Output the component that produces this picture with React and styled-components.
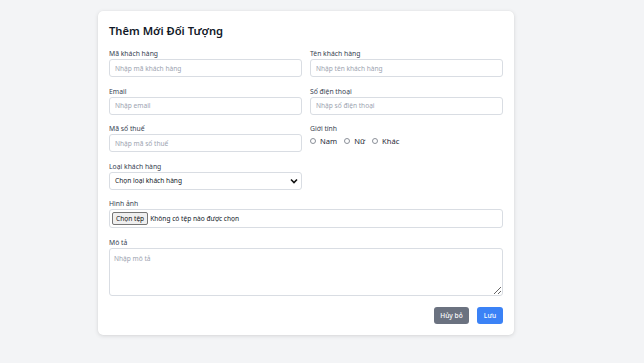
import React from "react";
import styled, { createGlobalStyle } from "styled-components";

const Global = createGlobalStyle`
  html, body { margin: 0; padding: 0; background: #f3f4f6; }
  body { font-family: "Noto Sans", "Open Sans", Arial, sans-serif; color: #1f2937; }
  * { box-sizing: border-box; }
`;

const Page = styled.div`
  min-height: 363px;
  display: flex;
  align-items: flex-start;
  justify-content: center;
  padding: 11px 32px 0 0;
`;

const Card = styled.form`
  width: 416px;
  background: #fff;
  border-radius: 5px;
  box-shadow: 0 1px 4px rgba(0, 0, 0, 0.12), 0 0 1px rgba(0, 0, 0, 0.08);
  padding: 11px 11px 11px 11px;
`;

const Title = styled.h2`
  margin: 0 0 9px 0;
  font-size: 11.2px;
  font-weight: 600;
  line-height: 18px;
  color: #111827;
`;

const Grid = styled.div`
  display: grid;
  grid-template-columns: 1fr 1fr;
  column-gap: 8px;
  row-gap: 9.6px;
`;

const Field = styled.div`
  display: flex;
  flex-direction: column;
  grid-column: ${(p) => (p.$full ? "1 / -1" : "auto")};
`;

const Label = styled.label`
  font-size: 6.8px;
  line-height: 10px;
  color: #374151;
  margin-bottom: 0;
`;

const Input = styled.input`
  height: 18px;
  border: 1px solid #d9dde3;
  border-radius: 3px;
  padding: 0 5px;
  font-family: inherit;
  font-size: 6.6px;
  color: #111827;
  outline: none;
  &::placeholder { color: #9ca3af; }
`;

const SelectWrap = styled.div`
  position: relative;
  height: 18px;
  border: 1px solid #d9dde3;
  border-radius: 3px;
  display: flex;
  align-items: center;
  padding: 0 5px;
  font-size: 6.6px;
  color: #111827;
`;

const Chevron = styled.svg`
  position: absolute;
  right: 3px;
  top: 5px;
`;

const Radios = styled.div`
  display: flex;
  align-items: center;
  height: 14px;
  gap: 7px;
`;

const RadioItem = styled.label`
  display: flex;
  align-items: center;
  gap: 4px;
  font-size: 7.6px;
  color: #1f2937;
`;

const RadioDot = styled.span`
  width: 6px;
  height: 6px;
  border: 1px solid #8b9099;
  border-radius: 50%;
  display: inline-block;
`;

const FileBox = styled.div`
  height: 19px;
  border: 1px solid #d9dde3;
  border-radius: 3px;
  display: flex;
  align-items: center;
  padding: 0 2px;
  gap: 2px;
  font-size: 6.6px;
  color: #111827;
`;

const FileButton = styled.span`
  height: 13px;
  padding: 0 3px;
  display: flex;
  align-items: center;
  background: #efefef;
  border: 1px solid #767676;
  border-radius: 2px;
  font-size: 6.6px;
  color: #111;
`;

const TextArea = styled.textarea`
  height: 48px;
  border: 1px solid #d9dde3;
  border-radius: 3px;
  padding: 5px 4px;
  font-family: inherit;
  font-size: 6.6px;
  resize: vertical;
  outline: none;
  &::placeholder { color: #9ca3af; }
`;

const Actions = styled.div`
  display: flex;
  justify-content: flex-end;
  gap: 8px;
  margin-top: 11px;
`;

const Button = styled.button`
  height: 17px;
  width: ${(p) => (p.$variant === "primary" ? "26px" : "35px")};
  padding: 0;
  border: none;
  border-radius: 3px;
  font-family: inherit;
  font-size: 6.6px;
  font-weight: 500;
  color: #fff;
  background: ${(p) => (p.$variant === "primary" ? "#3b82f6" : "#6b7280")};
`;

export default function App() {
  return (
    <>
      <Global />
      <Page>
        <Card onSubmit={(e) => e.preventDefault()}>
          <Title>Thêm Mới Đối Tượng</Title>
          <Grid>
            <Field>
              <Label>Mã khách hàng</Label>
              <Input placeholder="Nhập mã khách hàng" />
            </Field>
            <Field>
              <Label>Tên khách hàng</Label>
              <Input placeholder="Nhập tên khách hàng" />
            </Field>
            <Field>
              <Label>Email</Label>
              <Input placeholder="Nhập email" />
            </Field>
            <Field>
              <Label>Số điện thoại</Label>
              <Input placeholder="Nhập số điện thoại" />
            </Field>
            <Field>
              <Label>Mã số thuế</Label>
              <Input placeholder="Nhập mã số thuế" />
            </Field>
            <Field>
              <Label>Giới tính</Label>
              <Radios>
                <RadioItem><RadioDot />Nam</RadioItem>
                <RadioItem><RadioDot />Nữ</RadioItem>
                <RadioItem><RadioDot />Khác</RadioItem>
              </Radios>
            </Field>
            <Field>
              <Label>Loại khách hàng</Label>
              <SelectWrap>
                Chọn loại khách hàng
                <Chevron width="8" height="6" viewBox="0 0 8 6">
                  <path d="M1 1.5 L4 4.5 L7 1.5" fill="none" stroke="#111" strokeWidth="1.6" />
                </Chevron>
              </SelectWrap>
            </Field>
            <div />
            <Field $full>
              <Label>Hình ảnh</Label>
              <FileBox>
                <FileButton>Chọn tệp</FileButton>
                Không có tệp nào được chọn
              </FileBox>
            </Field>
            <Field $full>
              <Label>Mô tả</Label>
              <TextArea placeholder="Nhập mô tả" />
            </Field>
          </Grid>
          <Actions>
            <Button type="button">Hủy bỏ</Button>
            <Button type="submit" $variant="primary">Lưu</Button>
          </Actions>
        </Card>
      </Page>
    </>
  );
}
